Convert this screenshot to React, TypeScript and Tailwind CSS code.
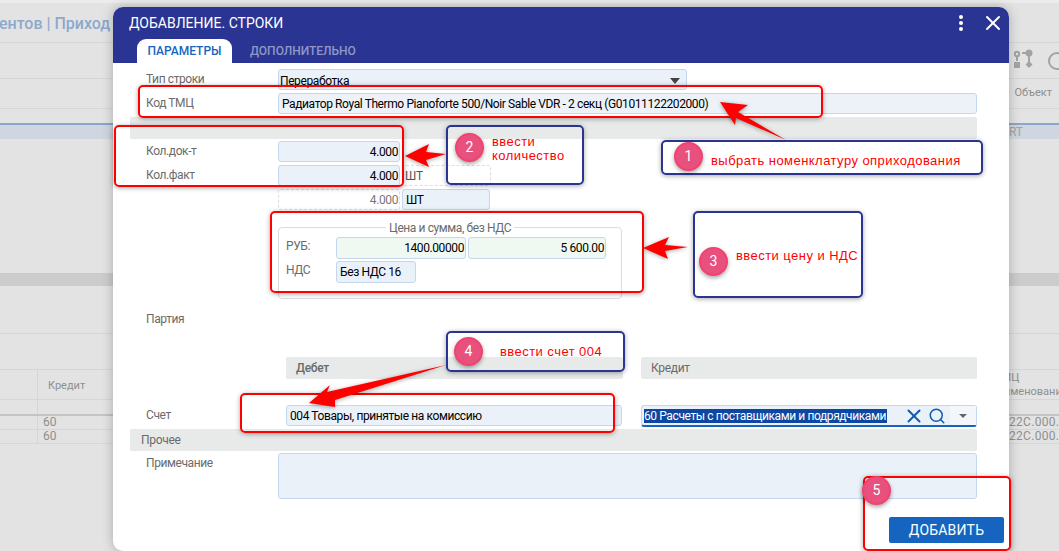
import React from 'react';
import { X, Search } from 'lucide-react';

const labelCls = "text-[12px] text-[#6b6b6b] leading-none tracking-[-0.4px]";
const fieldCls = "h-[21px] bg-[#eaf1f9] border border-[#c3d7ee] rounded-[3px] text-[12px] tracking-[-0.4px] leading-[20px] text-black";

const FormRow: React.FC<{ label?: string; children: React.ReactNode; className?: string }> = ({ label, children, className }) => (
  <div className={`flex items-start ${className ?? ''}`}>
    <div className={`w-[148px] pl-[16px] pt-[4px] ${labelCls}`}>{label}</div>
    {children}
  </div>
);

// Annotation frames lie over the dialog
const Frame: React.FC<{ className: string }> = ({ className }) => (
  <div className={`absolute rounded-[5px] border-2 shadow-[0_1px_5px_rgba(0,0,0,0.35)] ${className}`} />
);

const Step: React.FC<{ n: number; className: string }> = ({ n, className }) => (
  <div className={`absolute w-[29px] h-[29px] rounded-full bg-[#e8507e] border-2 border-[#f0436f] text-white text-[14px] flex items-center justify-center shadow-[0_2px_4px_rgba(0,0,0,0.35)] ${className}`}>
    {n}
  </div>
);

const Note: React.FC<{ children: React.ReactNode; className: string }> = ({ children, className }) => (
  <div className={`absolute text-[#ff0000] text-[13px] leading-[14px] tracking-[0.45px] font-['Liberation_Sans',sans-serif] whitespace-nowrap ${className}`}>
    {children}
  </div>
);

const Background = () => (
  <div className="h-[551px] bg-[#e3e3e3] text-[#8f8f8f] text-[11px] overflow-hidden">
    <div className="h-[3px] bg-[#ececec]" />
    <div className="h-[40px] border-b border-[#d6d6d6] flex items-center justify-between">
      <span className="text-[16px] font-medium text-[#8da9cc] ml-[-1px] pt-[2px]">ентов | Приход</span>
    </div>
    <div className="h-[36px] border-b border-[#d6d6d6] flex items-center justify-end">
      <svg width="47" height="24" viewBox="0 0 47 24" fill="none" stroke="#a3a3a3" strokeWidth="2">
        <circle cx="5" cy="5" r="2.2" />
        <path d="M5 8v4M10 4h6" />
        <circle cx="17" cy="4" r="2.5" fill="#a3a3a3" />
        <path d="M17 6v8" />
        <rect x="2" y="13" width="6" height="6" fill="#a3a3a3" stroke="none" />
        <path d="M17 12l3.5 3.5-3.5 3.5-3.5-3.5z" fill="#a3a3a3" stroke="none" />
        <circle cx="45" cy="12" r="8" />
      </svg>
    </div>
    <div className="h-[30px] border-b border-[#d6d6d6] flex items-center justify-end pr-[7px]">
      <span>Объект</span>
    </div>
    <div className="h-[14px]" />
    <div className="h-[16px] border-t-2 border-[#8aa6cb] bg-[#d0d6df] flex items-center justify-end pr-[36px] text-[12px] text-[#a3a3a3]">RT</div>
    <div className="h-[134px]" />
    <div className="h-[13px] bg-[#cccccc]" />
    <div className="h-[48px] border-b border-[#d6d6d6]" />
    <div className="h-[36px] border-b border-[#d6d6d6]" />
    <div className="h-[30px] border-b border-[#d6d6d6] flex items-start">
      <div className="w-[38px] h-full border-r border-[#d6d6d6]" />
      <span className="pl-[10px] pt-[8px]">Кредит</span>
      <div className="ml-auto w-[69px] text-[#8f8f8f] leading-[14px] pt-[1px] whitespace-nowrap">
        <div className="pl-[5px]">ТМЦ</div>
        <div>Наименование</div>
      </div>
    </div>
    <div className="h-[16px] border-b-2 border-[#c4c4c4] flex">
      <div className="w-[38px] h-full border-r border-[#d6d6d6]" />
    </div>
    {[0, 1].map((i) => (
      <div key={i} className="h-[14px] border-b border-[#d6d6d6] flex text-[12px] leading-[13px]">
        <div className="w-[38px] h-full border-r border-[#d6d6d6]" />
        <span className="pl-[5px]">60</span>
        <span className="ml-auto w-[50px] whitespace-nowrap tracking-[0.3px]">22C.000.</span>
      </div>
    ))}
  </div>
);

const Dialog = () => (
  <div className="absolute left-[113px] top-[7px] w-[896px] h-[544px] bg-white rounded-t-[10px] rounded-bl-[10px] shadow-[0_0_12px_rgba(0,0,0,0.25)] overflow-hidden font-['Roboto',sans-serif]">
    <div className="h-[56px] bg-[#2a3593] relative">
      <div className="flex items-center h-[32px] pl-[16px] pt-[1px] text-white text-[14px]">ДОБАВЛЕНИЕ. СТРОКИ</div>
      <div className="absolute right-[46px] top-[8px] flex flex-col gap-[2px]">
        <span className="w-[4px] h-[4px] rounded-full bg-white" />
        <span className="w-[4px] h-[4px] rounded-full bg-white" />
        <span className="w-[4px] h-[4px] rounded-full bg-white" />
      </div>
      <X className="absolute right-[4px] top-[4px] text-white" size={24} strokeWidth={2} />
      <div className="absolute left-[24px] bottom-0 flex items-end">
        <div className="h-[24px] w-[95px] bg-white rounded-t-[9px] text-[#1565c0] text-[12px] font-medium flex items-center justify-center">ПАРАМЕТРЫ</div>
        <div className="h-[24px] pl-[18px] text-[#8f97c8] text-[12px] font-medium flex items-center">ДОПОЛНИТЕЛЬНО</div>
      </div>
    </div>

    <div className="pl-[17px] pr-[32px] pt-[6px]">
      <FormRow label="Тип строки">
        <div className={`${fieldCls} w-[409px] pl-[1px] flex items-center justify-between pr-[6px]`}>
          <span className="pt-[2px]">Переработка</span>
          <span className="w-0 h-0 mt-[2px] border-x-[5px] border-x-transparent border-t-[6px] border-t-[#444444]" />
        </div>
      </FormRow>
      <FormRow label="Код ТМЦ" className="mt-[3px]">
        <div className={`${fieldCls} flex-1 pl-[3px] bg-[#edf2f9]`}>Радиатор Royal Thermo Pianoforte 500/Noir Sable VDR - 2 секц (G01011122202000)</div>
      </FormRow>
      <div className="h-[22px] mt-[3px] bg-[#e8eaea] rounded-[2px]" />
      <FormRow label="Кол.док-т" className="mt-[2px]">
        <div className={`${fieldCls} w-[122px] text-right pr-[1px]`}>4.000</div>
      </FormRow>
      <FormRow label="Кол.факт" className="mt-[3px]">
        <div className={`${fieldCls} w-[122px] text-right pr-[1px]`}>4.000</div>
        <div className="h-[21px] w-[88px] ml-[3px] border border-dashed border-[#dddddd] rounded-[3px] text-[12px] leading-[20px] text-[#555555] pl-[1px]">ШТ</div>
      </FormRow>
      <FormRow className="mt-[3px]">
        <div className="h-[21px] w-[122px] border border-dashed border-[#dddddd] rounded-[3px] text-right pr-[1px] text-[12px] tracking-[-0.4px] leading-[20px] text-[#777777]">4.000</div>
        <div className={`${fieldCls} w-[88px] ml-[2px] pl-[3px]`}>ШТ</div>
      </FormRow>

      <div className="ml-[148px] w-[344px] h-[72px] mt-[17px] border border-[#dcdcdc] rounded-[4px] relative px-[7px] pt-[9px]">
        <div className="absolute left-[107px] top-[-7px] bg-white px-[3px] text-[12px] tracking-[-0.4px] leading-[14px] text-[#6b6b6b] whitespace-nowrap">Цена и сумма, без НДС</div>
        <div className="flex items-start">
          <div className={`w-[50px] pt-[3px] ${labelCls}`}>РУБ:</div>
          <div className="h-[22px] w-[130px] bg-[#eff9f1] border border-[#c3d7ee] rounded-[3px] text-[12px] tracking-[-0.4px] leading-[20px] text-right pr-[1px] text-black">1400.00000</div>
          <div className="h-[22px] w-[138px] ml-[2px] bg-[#eff9f1] border border-[#c3d7ee] rounded-[3px] text-[12px] tracking-[-0.4px] leading-[20px] text-right pr-[1px] text-black">5 600.00</div>
        </div>
        <div className="flex items-start mt-[2px]">
          <div className={`w-[50px] pt-[3px] ${labelCls}`}>НДС</div>
          <div className={`${fieldCls} !h-[22px] w-[80px] pl-[3px]`}>Без НДС 16</div>
        </div>
      </div>

      <FormRow label="Партия" className="h-[21px] mt-[9px] pt-[1px]">
        <span />
      </FormRow>

      <div className="flex mt-[28px] ml-[156px]">
        <div className="w-[337px] h-[22px] bg-[#e8eaea] rounded-[2px] pl-[10px] text-[12px] tracking-[-0.3px] leading-[22px] font-medium text-[#6b6b6b]">Дебет</div>
        <div className="w-[336px] ml-[18px] h-[22px] bg-[#e8eaea] rounded-[2px] pl-[10px] text-[12px] tracking-[-0.3px] leading-[22px] text-[#6b6b6b]">Кредит</div>
      </div>

      <div className="flex items-start mt-[26px]">
        <div className={`w-[156px] pl-[16px] pt-[4px] ${labelCls}`}>Счет</div>
        <div className={`${fieldCls} w-[336px] pl-[3px]`}>004 Товары, принятые на комиссию</div>
        <div className="w-[336px] ml-[19px] h-[22px] bg-[#eaf1f9] border border-[#c3d7ee] border-b-2 border-b-[#1565c0] rounded-[3px] flex items-center text-[12px] tracking-[-0.4px]">
          <span className="ml-[2px] bg-[#0d47a1] text-white leading-[14px] w-[243px] whitespace-nowrap overflow-hidden">60 Расчеты с поставщиками и подрядчиками</span>
          <X className="ml-[16px] text-[#0f5cb0]" size={22} strokeWidth={2.2} />
          <Search className="ml-[3px] text-[#0f5cb0]" size={18} strokeWidth={2} />
          <div className="ml-auto w-[26px] h-full bg-[#f3f6fb] flex items-center justify-center">
            <span className="w-0 h-0 border-x-[4px] border-x-transparent border-t-[4px] border-t-[#666666]" />
          </div>
        </div>
      </div>

      <div className="h-[22px] mt-[2px] bg-[#e8eaea] rounded-[2px] pl-[11px] text-[12px] tracking-[-0.3px] leading-[22px] text-[#6b6b6b]">Прочее</div>
      <FormRow label="Примечание" className="mt-[2px]">
        <div className="flex-1 h-[46px] bg-[#eaf1f9] border border-[#c3d7ee] rounded-[3px]" />
      </FormRow>
      <div className="flex justify-end mt-[18px] mr-[-27px]">
        <div className="w-[115px] h-[26px] bg-[#1565c0] rounded-[2px] text-white text-[14px] tracking-[0.2px] flex items-center justify-center">ДОБАВИТЬ</div>
      </div>
    </div>
  </div>
);

export default function App() {
  return (
    <div className="relative w-[1059px] h-[551px] overflow-hidden font-['Roboto',sans-serif]">
      <Background />
      <Dialog />

      <Frame className="left-[138px] top-[85px] w-[685px] h-[33px] border-[#ff0000]" />
      <Frame className="left-[114px] top-[125px] w-[290px] h-[62px] border-[#ff0000]" />
      <Frame className="left-[270px] top-[211px] w-[374px] h-[82px] border-[#ff0000]" />
      <Frame className="left-[240px] top-[393px] w-[375px] h-[40px] border-[#ff0000]" />
      <Frame className="left-[863px] top-[476px] w-[148px] h-[75px] border-[#ff0000]" />

      <Frame className="left-[661px] top-[140px] w-[322px] h-[35px] border-[#2a3593]" />
      <Frame className="left-[446px] top-[125px] w-[138px] h-[60px] border-[#2a3593]" />
      <Frame className="left-[693px] top-[211px] w-[170px] h-[87px] border-[#2a3593]" />
      <Frame className="left-[446px] top-[331px] w-[179px] h-[41px] border-[#2a3593]" />

      <svg className="absolute left-0 top-0 pointer-events-none drop-shadow-[0_1px_2px_rgba(0,0,0,0.35)]" width="1059" height="551" fill="#ff0000">
        <polygon points="720,102 748,105 738,112 786,140 736,118 735,125" />
        <polygon points="405,156 429,144 426,152 446,154 426,160 429,167" />
        <polygon points="643,248 669,237 665,245 688,247 665,251 668,259" />
        <polygon points="309,403 330,385 327,392 446,365 335,400 335,407" />
      </svg>

      <Step n={1} className="left-[674px] top-[142px]" />
      <Step n={2} className="left-[455px] top-[133px]" />
      <Step n={3} className="left-[699px] top-[247px]" />
      <Step n={4} className="left-[454px] top-[337px]" />
      <Step n={5} className="left-[862px] top-[476px]" />

      <Note className="left-[711px] top-[154px]">выбрать номенклатуру оприходования</Note>
      <Note className="left-[492px] top-[135px]">ввести<br />количество</Note>
      <Note className="left-[736px] top-[249px]">ввести цену и НДС</Note>
      <Note className="left-[500px] top-[345px]">ввести счет 004</Note>
    </div>
  );
}
